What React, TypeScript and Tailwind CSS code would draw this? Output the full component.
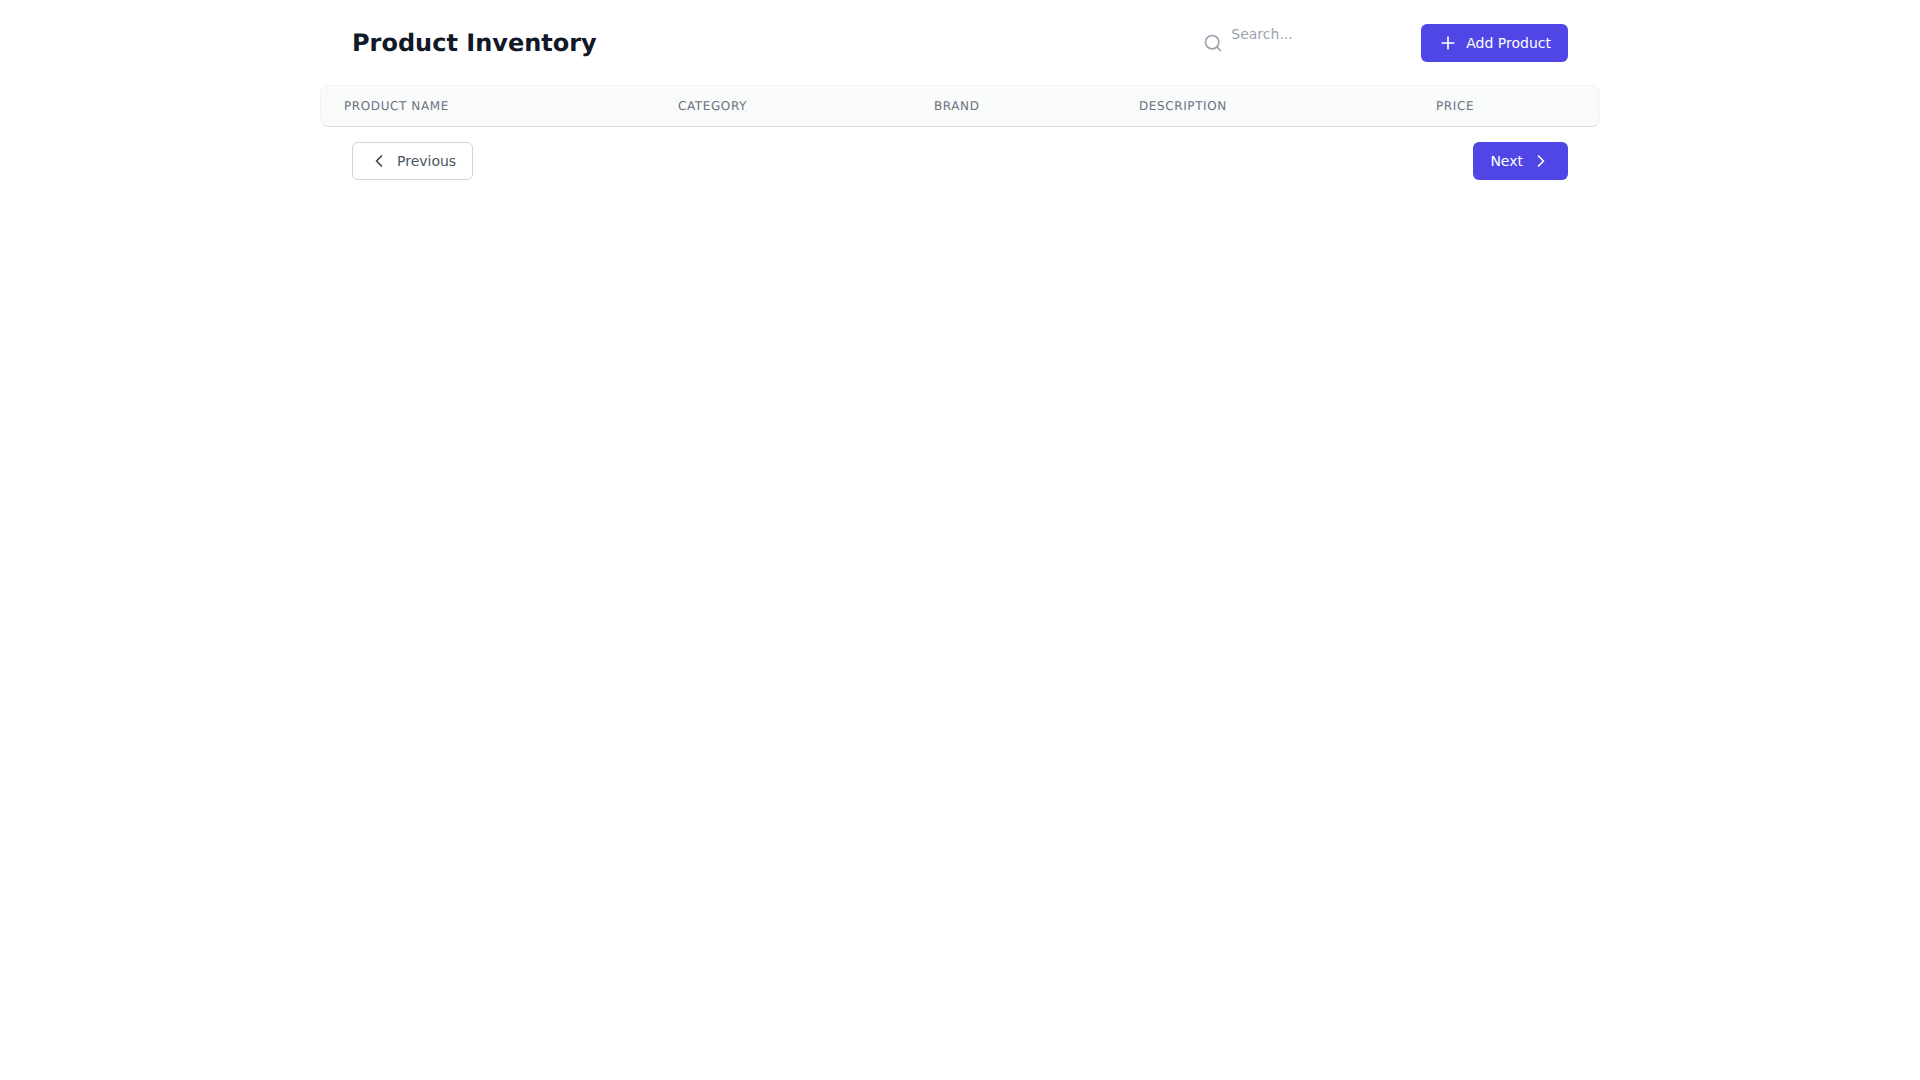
import { ChevronLeft, ChevronRight, Plus, Search } from "lucide-react";

const columns = [
  { label: "Product Name", width: "w-[334px]" },
  { label: "Category", width: "w-[256px]" },
  { label: "Brand", width: "w-[205px]" },
  { label: "Description", width: "w-[297px]" },
  { label: "Price", width: "w-[188px]" },
];

export default function App() {
  return (
    <div className="min-h-screen bg-white font-['DejaVu_Sans',sans-serif] [text-rendering:geometricPrecision]">
      <div className="mx-auto w-[1280px]">
        <div className="flex items-center justify-between px-8 pt-6 pb-[23px]">
          <h1 className="text-2xl font-bold text-[#111827]">Product Inventory</h1>
          <div className="flex items-center gap-4">
            <div className="flex w-[202px] items-center gap-2">
              <Search className="h-5 w-5 shrink-0 text-[#9ca3af]" />
              <input
                type="text"
                placeholder="Search..."
                className="mb-[18px] w-full bg-transparent text-sm leading-5 outline-none placeholder:text-[#9ca3af]"
              />
            </div>
            <button className="flex h-[38px] items-center gap-2 rounded-md border border-transparent bg-[#4f46e5] px-4 text-sm text-white">
              <Plus className="h-5 w-5" />
              Add Product
            </button>
          </div>
        </div>

        <div className="overflow-hidden rounded-lg border border-[#f3f4f6] border-b-[#dcdee4] bg-[#fafbfb] bg-[radial-gradient(#f3f4f6_1px,transparent_1px)] bg-[length:10px_10px]">
          <table className="-mx-px w-[1280px] max-w-none table-fixed">
            <thead>
              <tr>
                {columns.map((col) => (
                  <th
                    key={col.label}
                    className={`${col.width} h-10 px-6 text-left text-xs font-normal uppercase tracking-wider text-[#6b7280]`}
                  >
                    {col.label}
                  </th>
                ))}
              </tr>
            </thead>
          </table>
        </div>

        <div className="flex items-center justify-between px-8 pt-[15px]">
          <button className="flex h-[38px] items-center gap-2 rounded-md border border-[#d1d5db] bg-white px-4 text-sm text-[#4b5563]">
            <ChevronLeft className="h-5 w-5 text-[#374151]" />
            Previous
          </button>
          <button className="flex h-[38px] items-center gap-2 rounded-md border border-transparent bg-[#4f46e5] px-4 text-sm text-white">
            Next
            <ChevronRight className="h-5 w-5" />
          </button>
        </div>
      </div>
    </div>
  );
}
